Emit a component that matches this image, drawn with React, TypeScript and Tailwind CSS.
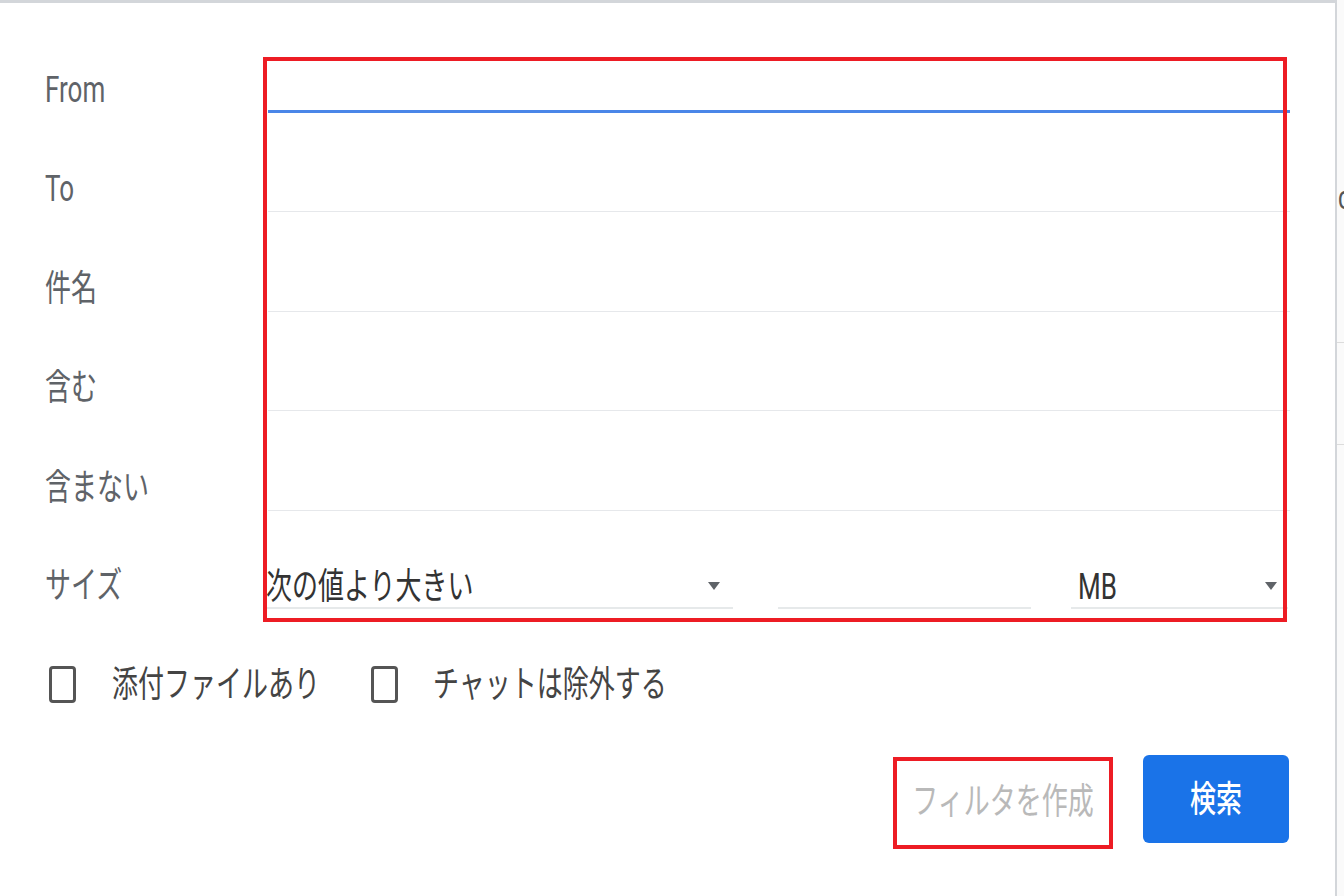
import React from "react";

const font = "font-['Roboto','Noto_Sans_CJK_JP',sans-serif]";

// the screenshot is stretched vertically, so text gets a y-scale
function T({ children, className = "" }: { children: React.ReactNode; className?: string }) {
  return <span className={`inline-block scale-y-[1.42] text-[26px] leading-[26px] ${className}`}>{children}</span>;
}

function Arrow() {
  return (
    <svg width="12" height="8" viewBox="0 0 12 8" className="shrink-0">
      <path d="M0 0h12L6 8z" fill="#5f6368" />
    </svg>
  );
}

const rows = ["From", "To", "件名", "含む", "含まない"];

export default function App() {
  return (
    <div className={`relative flex w-[1344px] h-[896px] overflow-hidden bg-white ${font}`}>
      <div className="w-[1337px] shrink-0 h-full flex flex-col border-t-[3px] border-r-2 border-[#d3d6da]">
        {/* Search fields */}
        <div className="pt-[10px]">
          {rows.map((label, i) => (
            <div key={label} className="flex h-[99.5px] items-end">
              <div className="w-[268px] pl-[45px] pb-[8px] text-[#5f6368]">
                <T>{label}</T>
              </div>
              <div
                className={`w-[1022px] h-full ${i === 0 ? "border-b-[3px] border-[#4a86e8]" : "border-b border-[#e6e8eb]"}`}
              />
            </div>
          ))}

          {/* Size row */}
          <div className="flex h-[98px] items-end">
            <div className="w-[268px] pl-[45px] pb-[8px] text-[#5f6368]">
              <T>サイズ</T>
            </div>
            <div className="flex items-end">
              <div className="w-[467px] flex items-center justify-between pb-[8px] pr-[13px] border-b-2 border-[#e6e9ea] -ml-[2px]">
                <T className="text-[#333]">次の値より大きい</T>
                <Arrow />
              </div>
              <div className="w-[253px] ml-[45px] h-[40px] border-b-2 border-[#e6e9ea]" />
              <div className="w-[217px] ml-[40px] flex items-center justify-between pb-[8px] pl-[7px] pr-[11px] border-b-2 border-[#e6e9ea]">
                <T className="text-[#333]">MB</T>
                <Arrow />
              </div>
            </div>
          </div>
        </div>

        {/* Checkboxes */}
        <div className="flex items-center mt-[57px] pl-[49px]">
          <div className="w-[27px] h-[37px] rounded-[4px] border-[3px] border-[#555]" />
          <T className="ml-[36px] text-[#444]">添付ファイルあり</T>
          <div className="ml-[51px] w-[27px] h-[37px] rounded-[4px] border-[3px] border-[#555]" />
          <T className="ml-[35px] text-[#444]">チャットは除外する</T>
        </div>

        {/* Buttons */}
        <div className="flex items-start justify-end mt-[52px] pr-[46px]">
          <div className="mt-[2px] w-[220px] h-[92px] border-4 border-[#ed1c24] flex items-center justify-center">
            <T className="text-[#b9b9b9] mt-[-4px]">フィルタを作成</T>
          </div>
          <div className="ml-[30px] w-[146px] h-[88px] rounded-[6px] bg-[#1a73e8] flex items-center justify-center">
            <T className="text-white font-medium">検索</T>
          </div>
        </div>
      </div>

      {/* Edge of the page behind */}
      <div className="flex-1 min-w-0 h-full bg-[#fafafa] flex flex-col overflow-hidden">
        <div className="h-[186px]" />
        <span className="inline-block scale-y-[1.4] text-[#555] text-[24px] leading-[24px] pl-[1px]">c</span>
        <div className="h-[132px]" />
        <div className="h-px bg-[#dcdcdc]" />
        <div className="h-[101px]" />
        <div className="h-px bg-[#dcdcdc]" />
      </div>

      {/* Annotation box */}
      <div className="absolute left-[263px] top-[57px] w-[1024px] h-[565px] border-4 border-[#ed1c24] pointer-events-none" />
    </div>
  );
}
